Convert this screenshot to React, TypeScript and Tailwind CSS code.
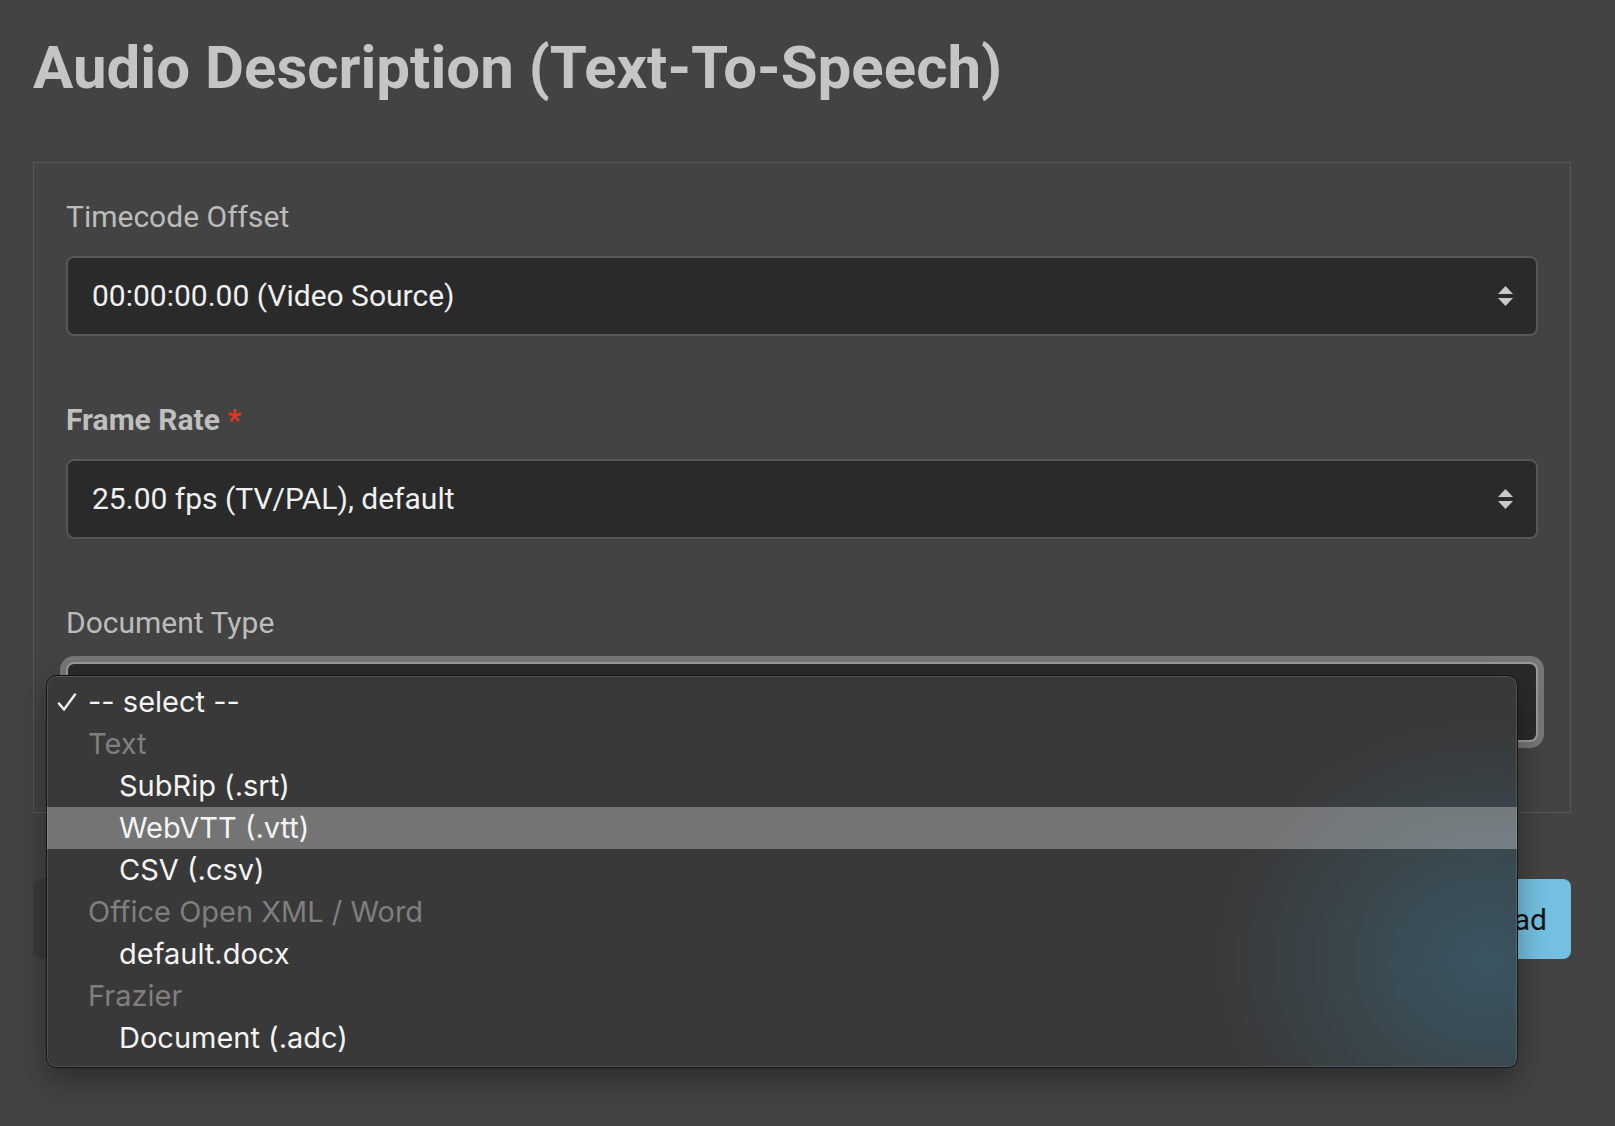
import React from "react";

function UpDown() {
  return (
    <svg width="15" height="20" viewBox="0 0 15 20" className="shrink-0">
      <path d="M7.5 0 L15 8 H0 Z" fill="#c9c9c9" />
      <path d="M0 12 H15 L7.5 20 Z" fill="#c9c9c9" />
    </svg>
  );
}

function Check() {
  return (
    <svg width="20" height="18" viewBox="0 0 20 18" className="shrink-0">
      <path d="M2 10.5 L7 16.5 L18 1.5" fill="none" stroke="#f2f2f2" strokeWidth="2.4" strokeLinecap="round" strokeLinejoin="round" />
    </svg>
  );
}

function Select({ value, focused }: { value: string; focused?: boolean }) {
  return (
    <div
      className={
        focused
          ? "flex h-[80px] items-center justify-between rounded-[8px] border-2 border-[#9a9a9a] bg-[#2a2a2a] pl-[24px] pr-[23px] shadow-[0_0_0_6px_#767676]"
          : "flex h-[80px] items-center justify-between rounded-[8px] border-2 border-[#565656] bg-[#2a2a2a] pl-[24px] pr-[23px]"
      }
    >
      <span className="text-[30px] leading-[36px] text-[#f0f0f0]">{value}</span>
      {!focused && <UpDown />}
    </div>
  );
}

const menu: { label: string; kind: "top" | "group" | "item"; active?: boolean }[] = [
  { label: "-- select --", kind: "top" },
  { label: "Text", kind: "group" },
  { label: "SubRip (.srt)", kind: "item" },
  { label: "WebVTT (.vtt)", kind: "item", active: true },
  { label: "CSV (.csv)", kind: "item" },
  { label: "Office Open XML / Word", kind: "group" },
  { label: "default.docx", kind: "item" },
  { label: "Frazier", kind: "group" },
  { label: "Document (.adc)", kind: "item" },
];

export default function App() {
  return (
    <div className="relative min-h-screen bg-[#434343] pl-[33px] pt-[32px] font-['Roboto',sans-serif]">
      <h1 className="text-[60px] font-bold leading-[72px] text-[#c5c5c5]">Audio Description (Text-To-Speech)</h1>

      <div className="mt-[58px] w-[1538px] border border-[#575757] px-[32px] pb-[70px] pt-[36px]">
        <div className="flex flex-col gap-[66px]">
          <div>
            <div className="text-[30px] leading-[36px] text-[#bcbcbc]">Timecode Offset</div>
            <div className="mt-[21px]">
              <Select value="00:00:00.00 (Video Source)" />
            </div>
          </div>
          <div>
            <div className="text-[30px] font-bold leading-[36px] text-[#bfbfbf]">
              Frame Rate <span className="text-[#e3351f]">*</span>
            </div>
            <div className="mt-[21px]">
              <Select value="25.00 fps (TV/PAL), default" />
            </div>
          </div>
          <div>
            <div className="text-[30px] leading-[36px] text-[#bcbcbc]">Document Type</div>
            <div className="mt-[21px]">
              <Select value="" focused />
            </div>
          </div>
        </div>
      </div>

      <div className="mt-[66px] flex w-[1538px] justify-between">
        <button className="h-[80px] rounded-[8px] bg-[#3a3a3a] px-[28px] text-[30px] text-[#cfcfcf]">Cancel</button>
        <button className="h-[80px] rounded-[8px] bg-[#74c0e0] px-[24px] text-[30px] text-[#111]">Download</button>
      </div>

      <div className="absolute left-[46px] top-[675px] w-[1472px] overflow-hidden rounded-[10px] border border-[#161616] bg-[#393939] bg-[radial-gradient(ellipse_270px_240px_at_1440px_285px,rgba(58,92,108,0.8),rgba(57,57,57,0)_100%)] pb-[8px] pt-[5px] font-['Inter',sans-serif] shadow-[inset_0_0_0_1px_rgba(255,255,255,0.12),0_12px_30px_rgba(0,0,0,0.35)]">
        {menu.map((m) => (
          <div
            key={m.label}
            className={
              m.active
                ? "flex h-[42px] items-center bg-white/30 text-[29px] text-[#f4f4f4]"
                : m.kind === "group"
                  ? "flex h-[42px] items-center text-[29px] text-[#7f7f7f]"
                  : "flex h-[42px] items-center text-[29px] text-[#f4f4f4]"
            }
          >
            {m.kind === "top" ? (
              <div className="flex items-center pl-[10px]">
                <Check />
                <span className="ml-[11px]">{m.label}</span>
              </div>
            ) : m.kind === "group" ? (
              <span className="pl-[41px]">{m.label}</span>
            ) : (
              <span className="pl-[72px]">{m.label}</span>
            )}
          </div>
        ))}
      </div>
    </div>
  );
}
